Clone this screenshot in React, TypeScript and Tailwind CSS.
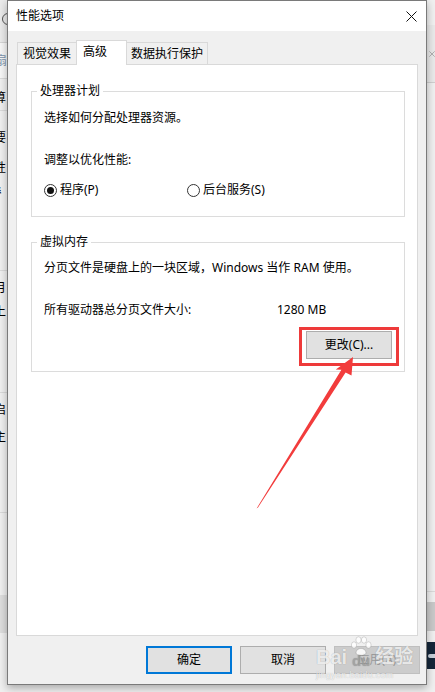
type Tab = { label: string; active?: boolean }

const tabs: Tab[] = [{ label: '视觉效果' }, { label: '高级', active: true }, { label: '数据执行保护' }]

function Radio({ checked }: { checked?: boolean }) {
  return (
    <span className="flex h-[13px] w-[13px] flex-none items-center justify-center rounded-full border border-[#333] bg-white">
      {checked && <span className="h-[7px] w-[7px] rounded-full bg-[#111]" />}
    </span>
  )
}

function Button({ label, primary, disabled }: { label: string; primary?: boolean; disabled?: boolean }) {
  if (primary) {
    return (
      <div className="flex h-[28px] w-[86px] items-center justify-center border-2 border-[#0078d7] bg-[#e1e1e1] leading-[16px]">
        {label}
      </div>
    )
  }
  if (disabled) {
    return (
      <div className="flex h-[28px] w-[86px] items-center justify-center border border-[#bfbfbf] bg-[#cccccc] leading-[16px] text-[#9a9a9a]">
        {label}
      </div>
    )
  }
  return (
    <div className="flex h-[28px] w-[86px] items-center justify-center border border-[#adadad] bg-[#e1e1e1] leading-[16px]">
      {label}
    </div>
  )
}

function CloseIcon() {
  return (
    <svg width="11" height="11" viewBox="0 0 11 11" className="flex-none">
      <path d="M0.5 0.5 L10.5 10.5 M10.5 0.5 L0.5 10.5" stroke="#111" strokeWidth="1" />
    </svg>
  )
}

// window behind the dialog, only its right edge peeks out
function LeftStrip() {
  return (
    <div className="flex w-[7px] flex-none flex-col overflow-hidden text-[12px] leading-[16px]">
      <div className="flex h-[43px] items-start border-b border-[#d5d5d5] bg-[#ebebeb] pt-[13px]">
        <span className="ml-[2px] h-[12px] w-[12px] flex-none rounded-full border-[1.5px] border-[#555]" />
      </div>
      <div className="h-[35px] bg-[#f7f7f7] pt-[10px]">
        <span className="-ml-[5px] block text-[#8095ad]">扇</span>
      </div>
      <div className="h-[32px] border-t border-[#dadada] pt-[11px]">
        <span className="-ml-[6px] block">算</span>
      </div>
      <div className="h-[160px] border-t border-[#dadada] pt-[19px]">
        <span className="-ml-[6px] block">要</span>
        <span className="-ml-[6px] mt-[14px] block">性</span>
        <span className="-ml-[6px] mt-[8px] block">衤</span>
      </div>
      <div className="h-[122px] border-t border-[#dadada] pt-[9px]">
        <span className="-ml-[6px] block">月</span>
        <span className="-ml-[6px] mt-[8px] block">上</span>
      </div>
      <div className="h-[120px] border-t border-[#dadada] pt-[9px]">
        <span className="-ml-[6px] block">启</span>
        <span className="-ml-[6px] mt-[11px] block">主</span>
      </div>
      <div className="h-[83px] border-t border-[#dadada]" />
      <div className="h-[38px] bg-[#dedede]" />
      <div className="flex-1" />
    </div>
  )
}

function RightStrip() {
  return (
    <div className="flex w-[8px] flex-none flex-col overflow-hidden">
      <div className="h-[25px]" />
      <div className="flex h-[58px] items-center border-b border-[#cfcfcf] bg-[#e9e9e9] pl-[2px]">
        <svg width="10" height="10" viewBox="0 0 10 10">
          <path d="M0.5 0.5 L9.5 9.5 M9.5 0.5 L0.5 9.5" stroke="#8a8a8a" strokeWidth="1" />
        </svg>
      </div>
      <div className="h-[509px] border-b border-[#dadada]" />
      <div className="h-[10px]" />
      <div className="h-[29px] bg-[#c9c9c9]" />
      <div className="h-[11px]" />
      <div className="flex h-[27px] items-center bg-[#15273a] pl-[1px]">
        <span className="h-[4px] w-[7px] rounded-l-full bg-[#c8d0da]" />
      </div>
      <div className="flex-1" />
    </div>
  )
}

function Arrow() {
  return (
    <svg className="pointer-events-none absolute left-0 top-0 z-20" width="435" height="692" viewBox="0 0 435 692">
      <polygon
        points="353,357 351.5,375.5 345.6,372.6 258,507.6 256.6,508.6 341.4,369.8 335.8,369.6"
        fill="#f23c3c"
      />
    </svg>
  )
}

function Watermark() {
  return (
    <div className="pointer-events-none absolute left-[316px] top-[636px] z-20 flex flex-col items-start font-['Liberation_Sans','Noto_Sans_CJK_SC',sans-serif] text-[rgba(255,255,255,0.8)] [text-shadow:0_0_1px_rgba(0,0,0,0.3)]">
      <div className="flex items-end">
        <span className="text-[20px] font-bold leading-[22px]">Bai</span>
        <span className="relative flex w-[28px] flex-col items-center">
          <svg width="22" height="20" viewBox="0 0 22 20" className="mb-[-2px]">
            <g fill="rgba(255,255,255,0.85)" stroke="rgba(0,0,0,0.18)" strokeWidth="0.8">
              <ellipse cx="4" cy="9" rx="2.6" ry="3.2" />
              <ellipse cx="8.5" cy="4" rx="2.6" ry="3.2" />
              <ellipse cx="14" cy="4" rx="2.6" ry="3.2" />
              <ellipse cx="18.5" cy="9" rx="2.6" ry="3.2" />
              <path d="M6 17 C6 11 16 11 16 17 C16 20 6 20 6 17 Z" />
            </g>
          </svg>
          <span className="text-[15px] font-bold leading-[14px] text-[rgba(170,170,170,0.7)]">du</span>
        </span>
        <span className="text-[19px] font-bold leading-[22px]">经验</span>
      </div>
      <span className="mt-[2px] text-[9px] leading-[10px] tracking-[0.3px]">jingyan.baidu.com</span>
    </div>
  )
}

function Dialog() {
  return (
    <div className="relative z-10 flex h-[685px] w-[420px] flex-none flex-col border border-[#7a7a7a] bg-[#f0f0f0] shadow-[0_3px_8px_rgba(0,0,0,0.3)]">
      <div className="flex h-[30px] flex-none items-center justify-between bg-white pl-[8px] pr-[9px]">
        <span className="leading-[16px]">性能选项</span>
        <CloseIcon />
      </div>

      <div className="flex flex-1 flex-col px-[8px] pt-[9px] pb-[10px]">
        <div className="flex h-[24px] flex-none items-end pl-[1px]">
          {tabs.map((tab, i) =>
            tab.active ? (
              <div
                key={tab.label}
                className="relative z-10 -mb-px -ml-px h-[25px] w-[51px] border-x border-t border-[#d9d9d9] bg-white pl-[6px] pt-[3px] leading-[16px]"
              >
                {tab.label}
              </div>
            ) : (
              <div
                key={tab.label}
                className={
                  i === 0
                    ? 'h-[22px] w-[60px] border-x border-t border-[#d9d9d9] bg-[#f0f0f0] pl-[5px] leading-[21px]'
                    : '-ml-px h-[22px] w-[82px] border-x border-t border-[#d9d9d9] bg-[#f0f0f0] pl-[4px] leading-[21px]'
                }
              >
                {tab.label}
              </div>
            )
          )}
        </div>

        <div className="flex flex-1 flex-col border border-[#d9d9d9] bg-white pl-[14px] pr-[12px] pt-[18px]">
          <fieldset className="border border-[#dcdcdc]">
            <legend className="ml-[5px] px-[3px] leading-[16px]">处理器计划</legend>
            <div className="flex flex-col pl-[12px] pt-[11px] pb-[18px] leading-[16px]">
              <span>选择如何分配处理器资源。</span>
              <span className="mt-[26px]">调整以优化性能:</span>
              <div className="mt-[14px] flex items-center">
                <div className="flex w-[143px] items-center gap-[3px]">
                  <Radio checked />
                  <span>程序(P)</span>
                </div>
                <div className="flex items-center gap-[3px]">
                  <Radio />
                  <span>后台服务(S)</span>
                </div>
              </div>
            </div>
          </fieldset>

          <fieldset className="mt-[17px] border border-[#dcdcdc]">
            <legend className="ml-[5px] px-[3px] leading-[16px]">虚拟内存</legend>
            <div className="flex flex-col pl-[12px] pr-[12px] pt-[10px] pb-[12px] leading-[16px]">
              <span>分页文件是硬盘上的一块区域，Windows 当作 RAM 使用。</span>
              <div className="mt-[26px] flex">
                <span className="w-[233px]">所有驱动器总分页文件大小:</span>
                <span>1280 MB</span>
              </div>
              <div className="mt-[13px] flex justify-end">
                <div className="relative">
                  <Button label="更改(C)..." />
                  <div className="pointer-events-none absolute -bottom-[7px] -left-[7px] -right-[7px] -top-[4px] border-[3px] border-[#ee3a3a]" />
                </div>
              </div>
            </div>
          </fieldset>
        </div>

        <div className="-mr-[2px] mt-[10px] flex flex-none justify-end gap-[8px]">
          <Button label="确定" primary />
          <Button label="取消" />
          <Button label="应用(A)" disabled />
        </div>
      </div>
    </div>
  )
}

export default function App() {
  return (
    <div className="relative flex h-[692px] w-[435px] overflow-hidden bg-[#f0f0f0] font-['Segoe_UI','Noto_Sans','Noto_Sans_CJK_SC',sans-serif] text-[12px] text-black">
      <LeftStrip />
      <Dialog />
      <RightStrip />
      <Arrow />
      <Watermark />
    </div>
  )
}
